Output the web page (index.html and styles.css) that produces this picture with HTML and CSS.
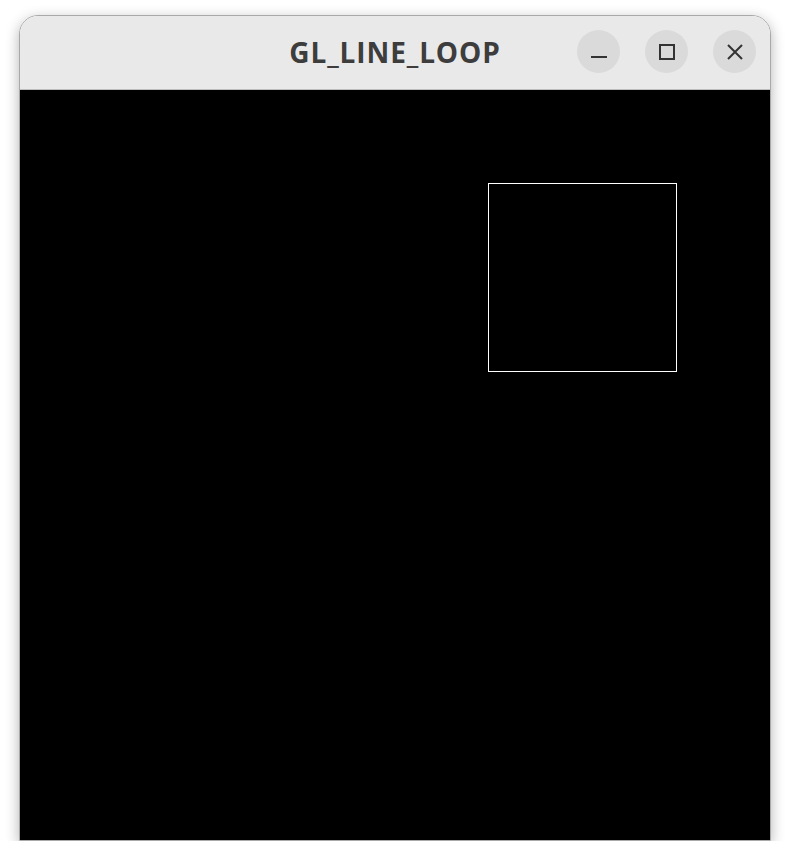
FILE: index.html
```html
<!DOCTYPE html>
<html>
<head>
<meta charset="utf-8">
<link rel="stylesheet" href="styles.css">
</head>
<body>
<div class="window">
  <div class="titlebar">
    <div class="title">GL_LINE_LOOP</div>
    <div class="controls">
      <div class="btn">
        <svg width="16" height="16" viewBox="0 0 16 16"><rect x="0" y="12" width="16" height="2" fill="#333"/></svg>
      </div>
      <div class="btn">
        <svg width="16" height="16" viewBox="0 0 16 16"><rect x="1" y="1" width="14" height="14" fill="none" stroke="#333" stroke-width="2"/></svg>
      </div>
      <div class="btn">
        <svg width="16" height="16" viewBox="0 0 16 16"><path d="M1 1 L15 15 M15 1 L1 15" stroke="#333" stroke-width="2" fill="none"/></svg>
      </div>
    </div>
  </div>
  <div class="canvas">
    <svg width="750" height="750" viewBox="0 0 750 750">
      <rect x="468.5" y="93.5" width="188" height="188" fill="none" stroke="#fff" stroke-width="1"/>
    </svg>
  </div>
</div>
</body>
</html>
```
FILE: styles.css
```css
html, body {
  margin: 0;
  padding: 0;
  background: #ffffff;
}
body {
  padding: 15px 0 0 19px;
}
.window {
  width: 750px;
  border: 1px solid #a9a9a9;
  border-radius: 19px 19px 0 0;
  box-shadow: 0 4px 14px rgba(0,0,0,0.3);
  overflow: hidden;
}
.titlebar {
  position: relative;
  height: 73px;
  background: #e9e9e9;
  border-bottom: 1px solid #bdbdbd;
  display: flex;
  align-items: center;
  justify-content: center;
}
.title {
  font-family: "Open Sans", "DejaVu Sans", sans-serif;
  font-weight: 700;
  font-size: 28px;
  color: #3d3d3d;
  letter-spacing: 0.9px;
  margin-top: -1px;
}
.controls {
  position: absolute;
  right: 14px;
  top: 14px;
  display: flex;
  gap: 25px;
}
.btn {
  width: 43px;
  height: 43px;
  border-radius: 50%;
  background: #dadada;
  display: flex;
  align-items: center;
  justify-content: center;
}
.btn svg {
  display: block;
}
.canvas {
  width: 750px;
  height: 750px;
  background: #000;
}
.canvas svg {
  display: block;
}
```
